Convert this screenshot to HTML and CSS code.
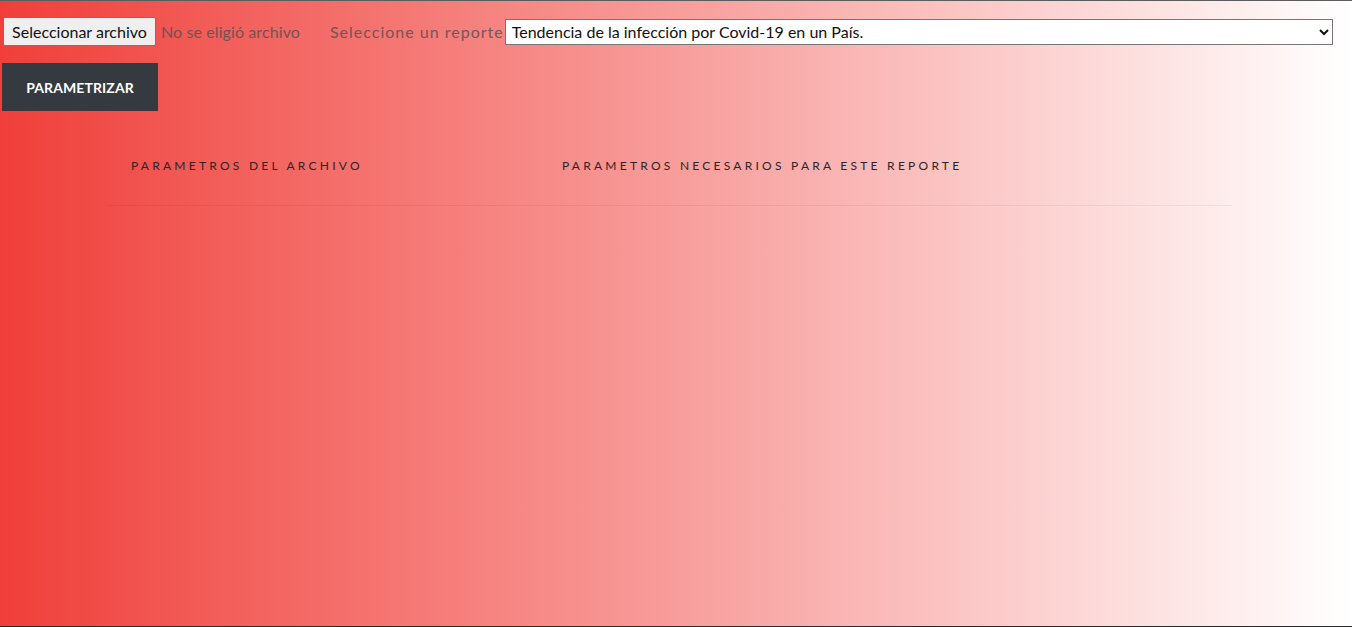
FILE: index.html
```html
<!DOCTYPE html>
<html lang="es">
<head>
<meta charset="utf-8">
<title>Reportes</title>
<link rel="stylesheet" href="styles.css">
</head>
<body>
<div class="page">
  <form class="toolbar">
    <div class="file-field">
      <button type="button" class="file-btn">Seleccionar archivo</button>
      <span class="file-name">No se eligió archivo</span>
    </div>
    <label class="report-label" for="reporte">Seleccione un reporte</label>
    <select id="reporte" class="report-select">
      <option>Tendencia de la infección por Covid-19 en un País.</option>
    </select>
  </form>
  <div class="actions">
    <button type="button" class="btn-dark">PARAMETRIZAR</button>
  </div>
  <div class="params">
    <div class="params-head">
      <div class="th th-file">PARAMETROS DEL ARCHIVO</div>
      <div class="th th-report">PARAMETROS NECESARIOS PARA ESTE REPORTE</div>
    </div>
  </div>
</div>
</body>
</html>
```
FILE: styles.css
```css
html, body {
  margin: 0;
  padding: 0;
  height: 100%;
}
body {
  font-family: "Lato", "Noto Sans", sans-serif;
  overflow: hidden;
}
.page {
  box-sizing: border-box;
  height: 627px;
  border-top: 1px solid #5c5c5c;
  border-bottom: 1px solid #2a2a2a;
  background: linear-gradient(to right, #f03f3a 0%, #f9b0ae 60%, #ffffff 100%);
  padding: 15px 19px 0 2px;
}
.toolbar {
  display: flex;
  align-items: center;
  height: 31px;
}
.file-field {
  display: flex;
  align-items: center;
}
.file-btn {
  font-family: inherit;
  font-size: 16px;
  color: #111;
  background: #efefef;
  border: 1px solid #767676;
  border-radius: 2px;
  height: 29px;
  width: 153px;
  padding: 0;
  margin: 0 5px 0 1px;
}
.file-name {
  font-size: 16px;
  letter-spacing: 0.1px;
  color: #5b5152;
  opacity: 0.85;
}
.report-label {
  font-size: 16px;
  letter-spacing: 1px;
  color: #5b5152;
  opacity: 0.85;
  margin-left: 30px;
  margin-right: 1px;
}
.report-select {
  flex: 1;
  font-family: inherit;
  font-size: 16px;
  color: #111;
  height: 26px;
  background: #fff;
  border: 1px solid #767676;
  border-radius: 0;
  padding: 0 2px;
}
.actions {
  margin-top: 16px;
}
.btn-dark {
  font-family: inherit;
  font-weight: 700;
  font-size: 14px;
  letter-spacing: 0.1px;
  color: #fff;
  background: #343a40;
  border: 0;
  border-radius: 0;
  width: 156px;
  height: 48px;
  padding: 0;
}
.params {
  margin: 32px 0 0 105px;
  width: 1125px;
}
.params-head {
  display: grid;
  grid-template-columns: 431px 1fr;
  border-bottom: 1px solid rgba(0, 0, 0, 0.05);
  height: 62px;
  align-items: start;
}
.th {
  font-size: 12px;
  line-height: 18px;
  letter-spacing: 3.25px;
  color: #2e2427;
  padding: 14px 0 0 24px;
  font-weight: 400;
}
```
